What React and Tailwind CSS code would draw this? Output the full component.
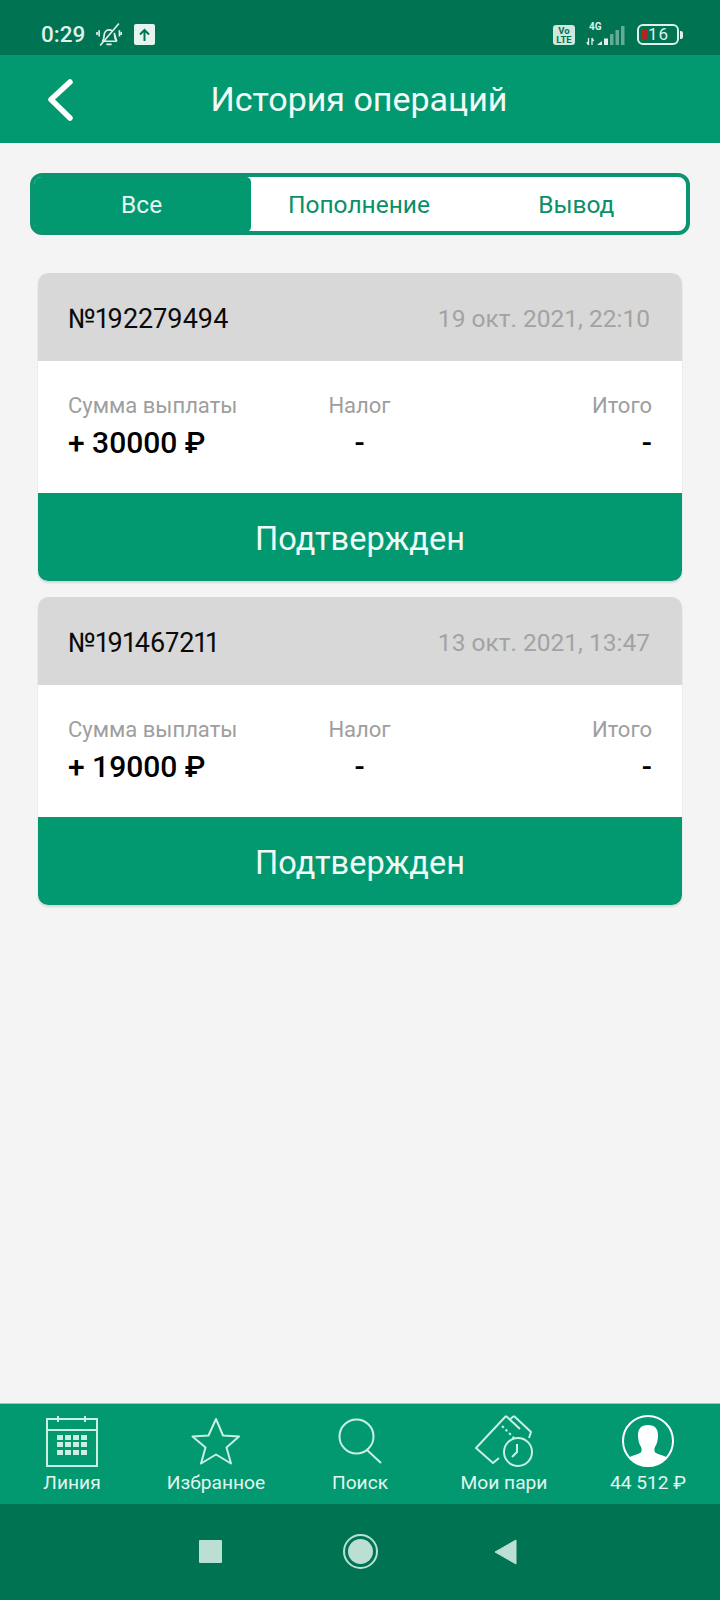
const operations = [
  { id: "№192279494", date: "19 окт. 2021, 22:10", sum: "+ 30000 ₽" },
  { id: "№191467211", date: "13 окт. 2021, 13:47", sum: "+ 19000 ₽" },
];

function StatusBar() {
  return (
    <div className="h-[55px] bg-[#007353] flex items-center justify-between pl-[41px] pr-[37px] pt-[14px] text-[#dff1ea]">
      <div className="flex items-center">
        <span className="text-[22.5px] leading-none font-medium w-[55px]">0:29</span>
        <svg width="26" height="25" viewBox="0 0 24 24" fill="none" stroke="#dff1ea" strokeWidth="1.6">
          <path d="M5.5 18.5c1.500-1.500 1.800-3 1.800-5.500 0-3 2-5.500 4.700-5.500 1.200 0 2.300.4 3.200 1.100M17 10.500c.3.800.4 1.600.4 2.500 0 2.500.6 4 2 5.500z" />
          <path d="M5.500 18.500h14M9.500 21.500h5M3.500 22.500L21.500 1.500M2.500 8v6M0.500 9.500v3M22 8v6M23.800 9.500v3" />
        </svg>
        <div className="ml-[12px] w-[21px] h-[21px] rounded-[2px] bg-[#e6f4ef] flex items-center justify-center">
          <svg width="13" height="13" viewBox="0 0 13 13" fill="none" stroke="#007353" strokeWidth="2">
            <path d="M6.500 13V2M2 6.500l4.500-4.500 4.500 4.500" />
          </svg>
        </div>
      </div>
      <div className="flex items-center">
        <div className="w-[22px] h-[20px] rounded-[3px] bg-[#cfe8df] text-[#007353] font-bold text-[9.5px] leading-[9px] text-center pt-[1px]">
          Vo<br />LTE
        </div>
        <div className="relative ml-[11px] w-[39px] h-[22px]">
          <span className="absolute left-[3px] top-[-2px] text-[10px] leading-none font-bold">4G</span>
          <svg className="absolute left-0 top-0" width="39" height="22" viewBox="0 0 39 22">
            <path d="M2.500 21v-7M0.800 18l1.700 3M6 14v7M6 14l1.700 3" stroke="#dff1ea" strokeWidth="1.300" fill="none" />
            <path d="M11 21l5-4v4z" fill="#dff1ea" />
            <rect x="18" y="14.500" width="4" height="6.500" fill="#dff1ea" />
            <rect x="24" y="10" width="3.500" height="11" fill="#dff1ea" opacity="0.45" />
            <rect x="29.500" y="6" width="3.500" height="15" fill="#dff1ea" opacity="0.45" />
            <rect x="35" y="2" width="3.500" height="19" fill="#dff1ea" opacity="0.45" />
          </svg>
        </div>
        <div className="ml-[12px] w-[42px] h-[21px] rounded-[6px] border-2 border-[#dff1ea] flex items-center pl-[3px]">
          <div className="w-[5px] h-[11px] bg-[#b3261e]" />
          <span className="ml-[1px] text-[17px] leading-none tracking-[1px]">16</span>
        </div>
        <div className="ml-[1px] w-[3px] h-[8px] rounded-r-[2px] bg-[#dff1ea]" />
      </div>
    </div>
  );
}

function Header() {
  return (
    <div className="h-[88px] bg-[#029970] relative flex items-center justify-center pr-[2px]">
      <svg className="absolute left-[47px] top-[23px]" width="28" height="44" viewBox="0 0 28 44" fill="none" stroke="#fff" strokeWidth="5.500" strokeLinecap="round" strokeLinejoin="round">
        <path d="M23 4L4 21.500 23 40" />
      </svg>
      <h1 className="text-[34px] text-[#f2fbf8] font-normal">История операций</h1>
    </div>
  );
}

function Tabs() {
  return (
    <div className="mx-[30px] mt-[30px] h-[62px] rounded-[12px] border-4 border-[#0a9470] bg-white grid grid-cols-3 text-[24.500px] text-[#0a8f69] text-center leading-[55px]">
      <div className="bg-[#029970] text-[#e6f8f2] rounded-l-[8px] rounded-r-[5px] pr-[2px]">Все</div>
      <div className="pr-[2px]">Пополнение</div>
      <div className="pr-[2px]">Вывод</div>
    </div>
  );
}

function OperationCard({ item }) {
  return (
    <div className="rounded-[10px] overflow-hidden shadow-[0_2px_2px_rgba(0,0,0,0.12)] bg-white">
      <div className="h-[88px] bg-[#d8d8d8] flex items-center justify-between pl-[30px] pr-[32px] pt-[4px]">
        <span className="text-[27px] text-[#0a0a0a] proportional-nums">{item.id}</span>
        <span className="text-[24.500px] text-[#a3a3a3]">{item.date}</span>
      </div>
      <div className="h-[132px] grid grid-cols-3 px-[30px] pt-[30px]">
        <div>
          <div className="text-[22px] leading-[30px] text-[#9e9e9e]">Сумма выплаты</div>
          <div className="text-[30px] leading-[44px] font-medium text-black whitespace-nowrap">{item.sum}</div>
        </div>
        <div className="text-center pr-[1px]">
          <div className="text-[22px] leading-[30px] text-[#9e9e9e]">Налог</div>
          <div className="text-[30px] leading-[44px] font-medium text-black">-</div>
        </div>
        <div className="text-right">
          <div className="text-[22px] leading-[30px] text-[#9e9e9e]">Итого</div>
          <div className="text-[30px] leading-[44px] font-medium text-black">-</div>
        </div>
      </div>
      <div className="h-[88px] bg-[#029970] flex items-center justify-center pt-[5px] text-[32.500px] text-[#f0faf7]">Подтвержден</div>
    </div>
  );
}

function NavItem({ label, children }) {
  return (
    <div className="flex flex-col items-center">
      <div className="h-[58px] flex items-center justify-center">{children}</div>
      <span className="text-[19.200px] leading-[26px] text-[#e3f6f0] whitespace-nowrap">{label}</span>
    </div>
  );
}

function BottomNav() {
  const c = "#c9f0e2";
  return (
    <div className="h-[101px] bg-[#029970] border-t border-[#8fcdb9] grid grid-cols-5 pt-[8px]">
      <NavItem label="Линия">
        <svg width="52" height="52" viewBox="0 0 52 52" fill="none" stroke={c} strokeWidth="2">
          <rect x="1" y="4" width="50" height="47" />
          <path d="M1 15h50M12 1v6M39 1v6" />
          <g fill={c} stroke="none">
            <rect x="11" y="20" width="6" height="5" /><rect x="19" y="20" width="6" height="5" /><rect x="27" y="20" width="6" height="5" /><rect x="35" y="20" width="6" height="5" />
            <rect x="11" y="27" width="6" height="5" /><rect x="19" y="27" width="6" height="5" /><rect x="27" y="27" width="6" height="5" /><rect x="35" y="27" width="6" height="5" />
            <rect x="11" y="35" width="6" height="5" /><rect x="19" y="35" width="6" height="5" /><rect x="27" y="35" width="6" height="5" /><rect x="35" y="35" width="6" height="5" />
          </g>
        </svg>
      </NavItem>
      <NavItem label="Избранное">
        <svg width="50" height="48" viewBox="0 0 50 48" fill="none" stroke={c} strokeWidth="2" strokeLinejoin="round">
          <path d="M25 2l7 16.500 16 1-12.500 11 4.500 16-15-9-15 9 4.500-16L1.500 19.500l16-1z" />
        </svg>
      </NavItem>
      <NavItem label="Поиск">
        <svg width="46" height="46" viewBox="0 0 46 46" fill="none" stroke={c} strokeWidth="2">
          <circle cx="19.500" cy="18.500" r="17" />
          <path d="M30 32l14 13" />
        </svg>
      </NavItem>
      <NavItem label="Мои пари">
        <svg width="58" height="52" viewBox="0 0 58 52" fill="none" stroke={c} strokeWidth="2" strokeLinejoin="round">
          <path d="M31 1L1 33l17 15 6-5M31 1l14 13M39 1l17 16-2 6M39 1l-5 4" />
          <path d="M27 11l12 12" strokeDasharray="2.500 2.500" />
          <circle cx="43" cy="37" r="14" />
          <path d="M42 29v8l-5 5" />
        </svg>
      </NavItem>
      <NavItem label="44 512 ₽">
        <svg width="52" height="52" viewBox="0 0 52 52">
          <defs>
            <clipPath id="avatar"><circle cx="26" cy="26" r="25" /></clipPath>
          </defs>
          <path clipPath="url(#avatar)" fill="#fff" d="M26 10c-7 0-10 4-10 10 0 5 1 9 3 12 1 2 1 5-1 6-4 2-11 3-13 7v7h42v-7c-2-4-9-5-13-7-2-1-2-4-1-6 2-3 3-7 3-12 0-6-3-10-10-10z" />
          <circle cx="26" cy="26" r="25" fill="none" stroke="#fff" strokeWidth="2" />
        </svg>
      </NavItem>
    </div>
  );
}

function SystemNav() {
  return (
    <div className="h-[96px] bg-[#007353] grid grid-cols-3 items-center px-[150px] pb-[1px]">
      <div className="justify-self-start ml-[49px] w-[23px] h-[23px] rounded-[1px] bg-[#bcdfd4]" />
      <div className="justify-self-center w-[35px] h-[35px] rounded-full border-2 border-[#bcdfd4] p-[3px]">
        <div className="w-full h-full rounded-full bg-[#bcdfd4]" />
      </div>
      <svg className="justify-self-end mr-[53px]" width="23" height="26" viewBox="0 0 23 26">
        <path d="M22 1v24L1 13z" fill="#bcdfd4" stroke="#bcdfd4" strokeWidth="1" strokeLinejoin="round" />
      </svg>
    </div>
  );
}

export default function App() {
  return (
    <div className="w-[720px] h-[1600px] flex flex-col bg-[#f4f4f4] font-['Roboto',sans-serif]">
      <StatusBar />
      <Header />
      <Tabs />
      <div className="flex-1 mx-[38px] mt-[38px] space-y-[16px]">
        {operations.map((item) => (
          <OperationCard key={item.id} item={item} />
        ))}
      </div>
      <BottomNav />
      <SystemNav />
    </div>
  );
}
